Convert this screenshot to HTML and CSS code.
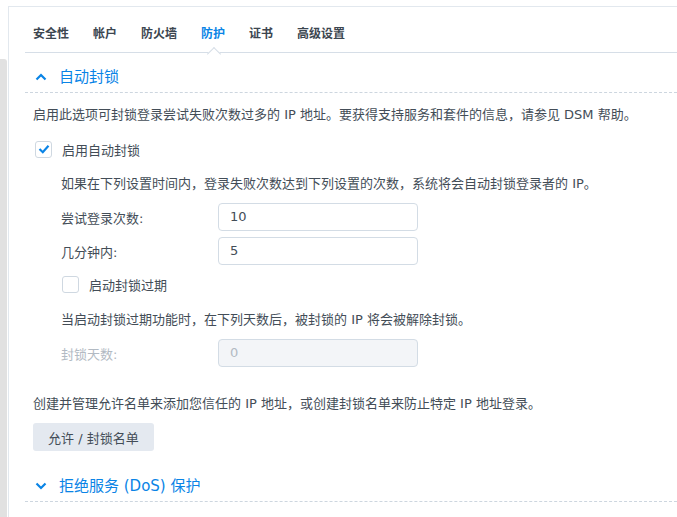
FILE: index.html
```html
<!DOCTYPE html>
<html lang="zh-CN">
<head>
<meta charset="utf-8">
<title>防护</title>
<link rel="stylesheet" href="styles.css">
</head>
<body>
<div class="page">
  <div class="side"><div class="scroll"></div></div>
  <div class="main">
    <div class="tabs">
      <span class="tab">安全性</span>
      <span class="tab">帐户</span>
      <span class="tab">防火墙</span>
      <span class="tab active">防护</span>
      <span class="tab">证书</span>
      <span class="tab">高级设置</span>
    </div>
    <div class="section">
      <div class="sec-head">
        <svg class="chev" width="12" height="8" viewBox="0 0 12 8"><polyline points="1.5,6.5 6,2 10.5,6.5" fill="none" stroke="#0a84e6" stroke-width="2.2"/></svg>
        <span>自动封锁</span>
      </div>
      <div class="sec-body">
        <p class="desc d1">启用此选项可封锁登录尝试失败次数过多的 IP 地址。要获得支持服务和套件的信息，请参见 DSM 帮助。</p>
        <label class="cb-row r1">
          <span class="cb checked"><svg width="14" height="14" viewBox="0 0 14 14"><polyline points="2.5,7 5.8,10.2 11.5,3.8" fill="none" stroke="#0a84e6" stroke-width="2.2"/></svg></span>
          <span>启用自动封锁</span>
        </label>
        <div class="indent">
          <p class="desc d2">如果在下列设置时间内，登录失败次数达到下列设置的次数，系统将会自动封锁登录者的 IP。</p>
          <div class="field f1"><span class="flabel">尝试登录次数:</span><span class="input">10</span></div>
          <div class="field f2"><span class="flabel">几分钟内:</span><span class="input">5</span></div>
          <label class="cb-row r2">
            <span class="cb"></span>
            <span>启动封锁过期</span>
          </label>
          <p class="desc d3">当启动封锁过期功能时，在下列天数后，被封锁的 IP 将会被解除封锁。</p>
          <div class="field f3 disabled"><span class="flabel">封锁天数:</span><span class="input">0</span></div>
        </div>
        <p class="desc d4">创建并管理允许名单来添加您信任的 IP 地址，或创建封锁名单来防止特定 IP 地址登录。</p>
        <button class="btn">允许 / 封锁名单</button>
      </div>
    </div>
    <div class="section">
      <div class="sec-head">
        <svg class="chev" width="12" height="8" viewBox="0 0 12 8"><polyline points="1.5,1.5 6,6 10.5,1.5" fill="none" stroke="#0a84e6" stroke-width="2.2"/></svg>
        <span>拒绝服务 (DoS) 保护</span>
      </div>
    </div>
  </div>
</div>
</body>
</html>
```
FILE: styles.css
```css
* { box-sizing: border-box; }
html, body { margin: 0; padding: 0; background: #fff; }
body {
  font-family: "DejaVu Sans", "Noto Sans CJK SC", sans-serif;
  font-size: 13px;
  color: #434d57;
  overflow: hidden;
}
.page { display: flex; height: 517px; }
.side { width: 8px; flex: none; padding-top: 59px; padding-right: 1px; }
.scroll { height: 100%; background: #e1e1e1; border-top-right-radius: 3px; }
.main {
  flex: 1;
  margin-top: 6px;
  border-top: 1px solid #e2e8ee;
  border-left: 1px solid #e2e8ee;
  padding-left: 16px;
}
.tabs {
  display: flex;
  gap: 24px;
  height: 46px;
  padding: 17px 0 0 8px;
  border-bottom: 1px solid #d6dee7;
  font-family: "Noto Sans CJK SC", sans-serif;
  font-size: 12px;
  font-weight: 700;
  line-height: 18px;
  color: #3c4650;
}
.tab { position: relative; }
.tab.active { color: #0a84e6; }
.tab.active::after {
  content: "";
  position: absolute;
  left: 50%;
  top: 25px;
  width: 9px;
  height: 9px;
  margin-left: -4px;
  background: #fff;
  border-top: 1px solid #d6dee7;
  border-left: 1px solid #d6dee7;
  transform: rotate(45deg);
}
.sec-head {
  display: flex;
  align-items: center;
  height: 40px;
  padding: 14px 0 5px 10px;
  border-bottom: 1px dashed #cdd6df;
  font-family: "Noto Sans CJK SC", sans-serif;
  font-size: 15px;
  line-height: 20px;
  color: #0a84e6;
}
.sec-head span { font-family: "DejaVu Sans", "Noto Sans CJK SC", sans-serif; }
.chev { margin-right: 12px; }
.sec-body { padding-left: 8px; }
.desc { margin: 0; line-height: 20px; }
.d1 { margin-top: 12px; }
.cb-row { display: flex; align-items: center; height: 20px; gap: 10px; }
.r1 { margin-top: 14px; padding-left: 2px; }
.cb {
  width: 17px; height: 17px;
  border: 1px solid #cfd8e1;
  border-radius: 3px;
  background: #fff;
  display: flex; align-items: center; justify-content: center;
}
.indent { padding-left: 28px; }
.d2 { margin-top: 15px; }
.field { display: flex; align-items: center; height: 28px; }
.flabel { width: 157px; flex: none; }
.input {
  width: 200px; height: 28px;
  border: 1px solid #d3dce5;
  border-radius: 4px;
  padding-left: 11px;
  line-height: 26px;
  color: #434d57;
}
.f1 { margin-top: 9px; }
.f2 { margin-top: 6px; }
.r2 { margin-top: 9px; padding-left: 1px; }
.d3 { margin-top: 16px; }
.f3 { margin-top: 9px; }
.disabled .flabel { color: #b2bac3; }
.disabled .input { background: #f3f5f8; color: #b2bac3; }
.d4 { margin-top: 27px; }
.btn {
  display: block;
  margin-top: 9px;
  height: 28px;
  padding: 0 15px;
  border: none;
  border-radius: 3px;
  background: #e4e9f0;
  font-family: "DejaVu Sans", "Noto Sans CJK SC", sans-serif;
  font-size: 13px;
  color: #434d57;
}
.section + .section .sec-head { margin-top: 11px; }
```
